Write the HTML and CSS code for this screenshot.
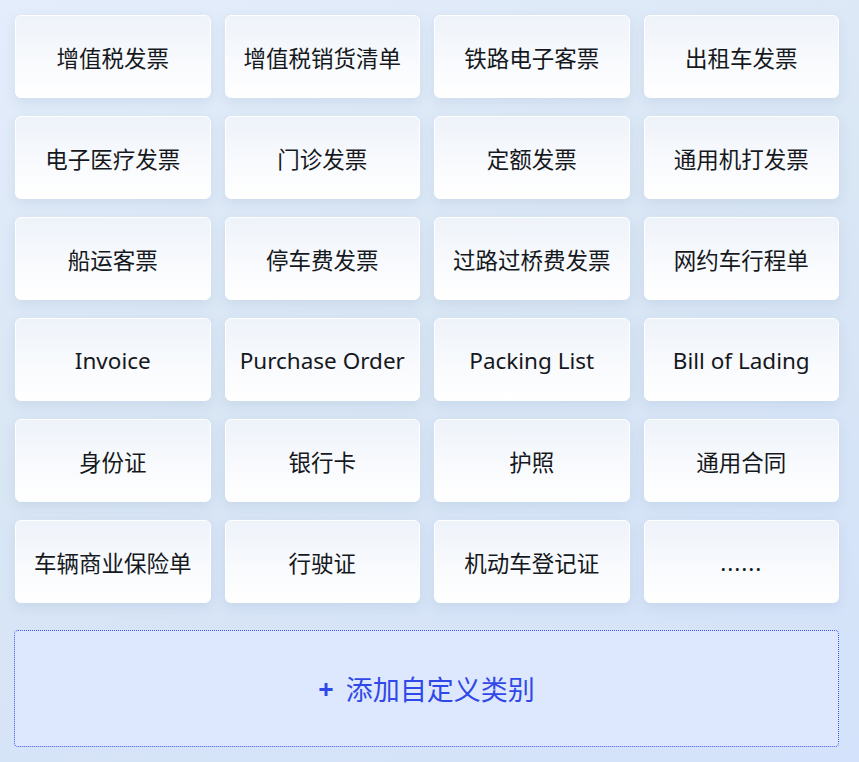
FILE: index.html
```html
<!DOCTYPE html>
<html lang="zh-CN">
<head>
    <meta charset="UTF-8">
    <meta name="viewport" content="width=device-width, initial-scale=1.0">
    <title>选择单据类别</title>
    <link rel="stylesheet" href="styles.css">
</head>
<body>
    <div class="category-panel">
        <div class="category-grid">
            <div class="category-card">增值税发票</div>
            <div class="category-card">增值税销货清单</div>
            <div class="category-card">铁路电子客票</div>
            <div class="category-card">出租车发票</div>

            <div class="category-card">电子医疗发票</div>
            <div class="category-card">门诊发票</div>
            <div class="category-card">定额发票</div>
            <div class="category-card">通用机打发票</div>

            <div class="category-card">船运客票</div>
            <div class="category-card">停车费发票</div>
            <div class="category-card">过路过桥费发票</div>
            <div class="category-card">网约车行程单</div>

            <div class="category-card">Invoice</div>
            <div class="category-card">Purchase Order</div>
            <div class="category-card">Packing List</div>
            <div class="category-card">Bill of Lading</div>

            <div class="category-card">身份证</div>
            <div class="category-card">银行卡</div>
            <div class="category-card">护照</div>
            <div class="category-card">通用合同</div>

            <div class="category-card">车辆商业保险单</div>
            <div class="category-card">行驶证</div>
            <div class="category-card">机动车登记证</div>
            <div class="category-card more">......</div>
        </div>

        <div class="add-category">
            <span class="add-icon">+</span>
            <span>添加自定义类别</span>
        </div>
    </div>
</body>
</html>
```

FILE: styles.css
```css
html, body {
    height: 100%;
}

body {
    margin: 0;
    font-family: "Noto Sans", "Noto Sans CJK SC", sans-serif;
    background: linear-gradient(160deg, #e4edfb 0%, #d9e6f4 45%, #d4e2fb 100%);
    color: #15181c;
    overflow: hidden;
}

.category-panel {
    padding: 15px 20px 0 15px;
}

.category-grid {
    display: grid;
    grid-template-columns: repeat(4, 1fr);
    column-gap: 14px;
    row-gap: 18px;
}

.category-card {
    height: 83px;
    box-sizing: border-box;
    padding-top: 2px;
    display: flex;
    align-items: center;
    justify-content: center;
    border: 1px solid #ffffff;
    border-radius: 6px;
    background: linear-gradient(180deg, #eef3fa 0%, #f8fafd 55%, #ffffff 100%);
    box-shadow: 0 4px 12px rgba(140, 170, 195, 0.22);
    font-size: 22.5px;
    white-space: nowrap;
}

.category-card.more {
    letter-spacing: 1px;
}

.add-category {
    margin-top: 27px;
    margin-left: -1px;
    height: 117px;
    box-sizing: border-box;
    display: flex;
    align-items: center;
    justify-content: center;
    border: 1px dotted #3d55f0;
    border-radius: 4px;
    background-color: #dde8fe;
    color: #3148e8;
    font-size: 27px;
}

.add-icon {
    font-size: 27px;
    font-weight: 700;
    margin-right: 12px;
}
```
